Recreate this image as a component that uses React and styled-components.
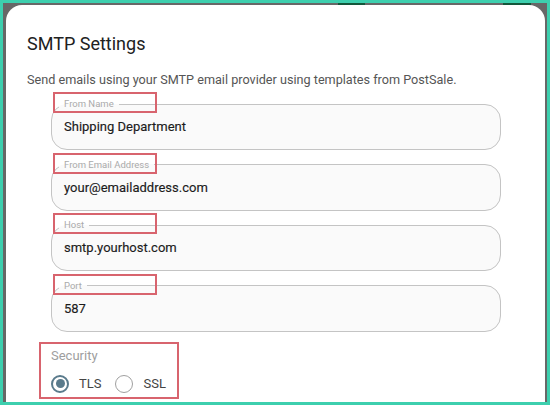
import React from "react";
import styled, { createGlobalStyle } from "styled-components";

const Global = createGlobalStyle`
  html, body { margin: 0; padding: 0; background: #fff; }
  body { font-family: Roboto, "Noto Sans", Arial, sans-serif; }
  * { box-sizing: border-box; }
`;

const Frame = styled.div`
  width: 550px;
  height: 405px;
  border: 3px solid #3dcfae;
  background: #676767;
  display: flex;
  flex-direction: column;
  overflow: hidden;
`;

const BackdropStrip = styled.div`
  height: 2px;
  flex: none;
  display: flex;
`;

const Mark = styled.span`
  height: 2px;
  width: ${(p) => p.$w}px;
  margin-left: ${(p) => p.$ml}px;
  background: #14563a;
`;

const ModalRow = styled.div`
  flex: 1;
  display: flex;
  padding: 0 2px 0 3px;
`;

const Modal = styled.div`
  flex: 1;
  background: #fff;
  border-radius: 16px 16px 0 0;
  padding: 27px 21px 0 21px;
`;

const Title = styled.h2`
  margin: 0;
  font-size: 18px;
  line-height: 24px;
  font-weight: 400;
  color: #212121;
`;

const Subtitle = styled.p`
  margin: 15px 0 0 0;
  font-size: 12.65px;
  line-height: 18px;
  color: #555;
`;

const Fields = styled.div`
  margin-top: 9px;
  padding: 0 23px 0 24px;
  display: flex;
  flex-direction: column;
  gap: 8.5px;
`;

const FieldWrap = styled.div`
  position: relative;
`;

const Fieldset = styled.fieldset`
  margin: 0;
  padding: 0 12px 0 7px;
  border: 1px solid #c4c4c4;
  border-radius: 16px;
  background: #fafafa;
  min-width: 0;
`;

const Legend = styled.legend`
  padding: 0 5px;
  font-size: 9.5px;
  line-height: 12px;
  color: #aaa;
`;

const Value = styled.div`
  height: 39px;
  padding: 9px 0 0 5px;
  font-size: 13px;
  line-height: 16px;
  font-weight: 400;
  color: #1c1c1c;
  -webkit-text-stroke: 0.15px #1c1c1c;
`;

const Highlight = styled.span`
  position: absolute;
  left: ${(p) => p.$left}px;
  top: ${(p) => p.$top}px;
  width: ${(p) => p.$w}px;
  height: ${(p) => p.$h}px;
  border: 2px solid #d8646e;
  pointer-events: none;
`;

const Security = styled.div`
  position: relative;
  margin: 16px 0 0 24px;
  width: 130px;
`;

const SecurityLabel = styled.div`
  font-size: 13px;
  line-height: 16px;
  color: #9e9e9e;
`;

const RadioRow = styled.div`
  margin-top: 10px;
  display: flex;
  align-items: center;
  height: 20px;
`;

const RadioOption = styled.label`
  display: flex;
  align-items: center;
  gap: 10px;
  margin-right: 14px;
  font-size: 13px;
  color: #444;
`;

const RadioCircle = styled.span`
  width: 18px;
  height: 18px;
  border-radius: 50%;
  border: ${(p) => (p.$checked ? "2px solid #5a7b8c" : "1.5px solid #a0a0a0")};
  display: flex;
  align-items: center;
  justify-content: center;
  &::after {
    content: "";
    width: 9px;
    height: 9px;
    border-radius: 50%;
    background: ${(p) => (p.$checked ? "#5a7b8c" : "transparent")};
  }
`;

const fields = [
  { label: "From Name", value: "Shipping Department" },
  { label: "From Email Address", value: "your@emailaddress.com" },
  { label: "Host", value: "smtp.yourhost.com" },
  { label: "Port", value: "587" },
];

export default function App() {
  return (
    <>
      <Global />
      <Frame>
        <BackdropStrip>
          <Mark $ml={335} $w={27} />
          <Mark $ml={138} $w={28} />
        </BackdropStrip>
        <ModalRow>
          <Modal>
            <Title>SMTP Settings</Title>
            <Subtitle>
              Send emails using your SMTP email provider using templates from PostSale.
            </Subtitle>
            <Fields>
              {fields.map((f) => (
                <FieldWrap key={f.label}>
                  <Fieldset>
                    <Legend>{f.label}</Legend>
                    <Value>{f.value}</Value>
                  </Fieldset>
                  <Highlight $left={2} $top={-6} $w={104} $h={21} />
                </FieldWrap>
              ))}
            </Fields>
            <Security>
              <SecurityLabel>Security</SecurityLabel>
              <RadioRow>
                <RadioOption>
                  <RadioCircle $checked />
                  TLS
                </RadioOption>
                <RadioOption>
                  <RadioCircle />
                  SSL
                </RadioOption>
              </RadioRow>
              <Highlight $left={-12} $top={-6} $w={140} $h={57} />
            </Security>
          </Modal>
        </ModalRow>
      </Frame>
    </>
  );
}
